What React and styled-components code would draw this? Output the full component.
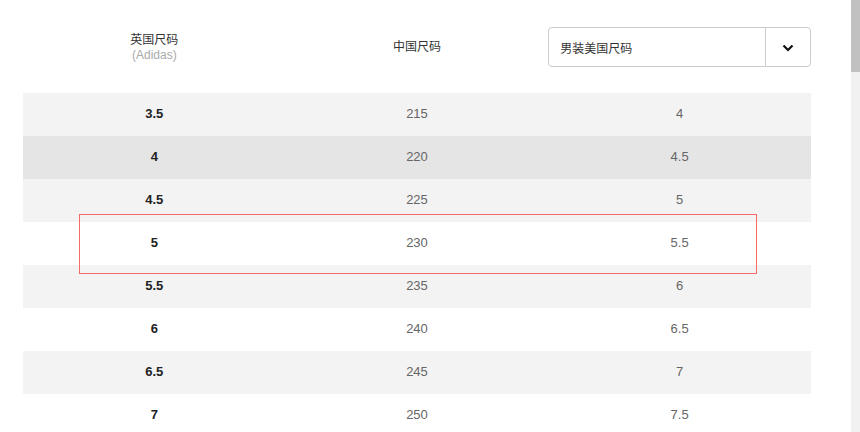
import React from 'react';
import styled, { createGlobalStyle } from 'styled-components';

const GlobalStyle = createGlobalStyle`
    html, body {
        margin: 0;
        padding: 0;
        background: #fff;
        font-family: "Liberation Sans", "Noto Sans CJK SC", sans-serif;
        overflow: hidden;
    }
`;

const rows = [
    ['3.5', '215', '4'],
    ['4', '220', '4.5'],
    ['4.5', '225', '5'],
    ['5', '230', '5.5'],
    ['5.5', '235', '6'],
    ['6', '240', '6.5'],
    ['6.5', '245', '7'],
    ['7', '250', '7.5'],
];

function App() {
    return (
        <Page>
            <GlobalStyle />
            <SizeChartStyled>
                <HeaderRow>
                    <HeadCell>
                        <HeadTitle>英国尺码</HeadTitle>
                        <HeadSub>(Adidas)</HeadSub>
                    </HeadCell>
                    <HeadCell>
                        <HeadTitle>中国尺码</HeadTitle>
                    </HeadCell>
                    <HeadCell>
                        <Select>
                            <SelectLabel>男装美国尺码</SelectLabel>
                            <SelectButton>
                                <svg width="12" height="8" viewBox="0 0 12 8">
                                    <path d="M1.5 1.5 L6 6 L10.5 1.5" fill="none" stroke="#111" strokeWidth="2.2" />
                                </svg>
                            </SelectButton>
                        </Select>
                    </HeadCell>
                </HeaderRow>
                <Table>
                    {rows.map((r, i) => (
                        <Row key={r[0]} $shade={i === 1 ? 'hover' : i % 2 === 0 ? 'grey' : 'white'}>
                            <Cell $bold>{r[0]}</Cell>
                            <Cell>{r[1]}</Cell>
                            <Cell>{r[2]}</Cell>
                        </Row>
                    ))}
                    <Highlight />
                </Table>
            </SizeChartStyled>
            <ScrollTrack>
                <ScrollThumb />
            </ScrollTrack>
        </Page>
    );
}

const Page = styled.div`
    display: flex;
    height: 432px;
    overflow: hidden;
`;

const SizeChartStyled = styled.div`
    flex: 1;
    padding: 0 40px 0 23px;
`;

const HeaderRow = styled.div`
    display: grid;
    grid-template-columns: repeat(3, 1fr);
    height: 93px;
    align-items: center;
`;

const HeadCell = styled.div`
    display: flex;
    flex-direction: column;
    align-items: center;
    justify-content: center;
    padding-top: 2px;
`;

const HeadTitle = styled.div`
    font-size: 12px;
    line-height: 15px;
    color: #333;
`;

const HeadSub = styled.div`
    font-size: 12px;
    line-height: 15px;
    color: #aaa;
`;

const Select = styled.div`
    align-self: stretch;
    display: flex;
    height: 38px;
    margin-top: -1px;
    border: 1px solid #ccc;
    border-radius: 4px;
`;

const SelectLabel = styled.div`
    flex: 1;
    display: flex;
    align-items: center;
    padding-left: 11px;
    font-size: 12px;
    color: #333;
`;

const SelectButton = styled.div`
    width: 44px;
    border-left: 1px solid #ccc;
    display: flex;
    align-items: center;
    justify-content: center;
    padding-top: 2px;
`;

const Table = styled.div`
    position: relative;
`;

const shades = {
    grey: '#f3f3f3',
    hover: '#e5e5e5',
    white: '#fff',
};

const Row = styled.div`
    display: grid;
    grid-template-columns: repeat(3, 1fr);
    height: 43px;
    align-items: center;
    background: ${p => shades[p.$shade]};
`;

const Cell = styled.div`
    text-align: center;
    font-size: 13px;
    padding-bottom: 2px;
    font-weight: ${p => (p.$bold ? 700 : 400)};
    color: ${p => (p.$bold ? '#222' : '#666')};
`;

const Highlight = styled.div`
    position: absolute;
    left: 56px;
    top: 121px;
    width: 676px;
    height: 58px;
    border: 1px solid #f76a6a;
    pointer-events: none;
`;

const ScrollTrack = styled.div`
    width: 9px;
    flex-shrink: 0;
    background: #f1f1f1;
`;

const ScrollThumb = styled.div`
    height: 72px;
    background: #c1c1c1;
`;

export default App;
